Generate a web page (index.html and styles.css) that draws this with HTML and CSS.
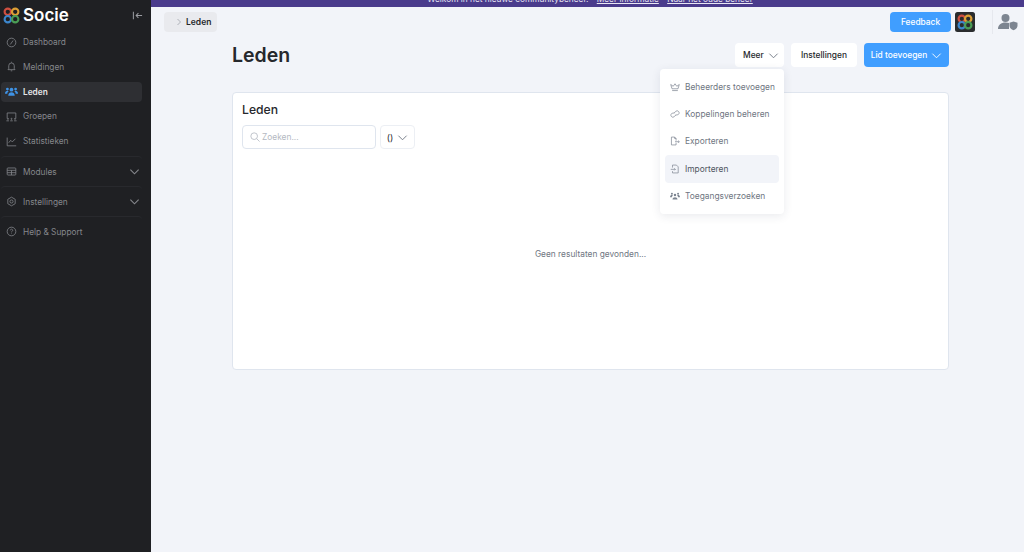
FILE: index.html
```html
<!DOCTYPE html>
<html lang="nl">
<head>
  <meta charset="UTF-8">
  <title>Leden - Socie</title>
  <link rel="stylesheet" href="styles.css">
</head>
<body>
  <aside class="sidebar">
    <div class="brand">
      <svg class="logo" viewBox="0 0 17 17" width="17" height="17" fill="none" stroke-width="2.1">
        <circle cx="4.800" cy="4.800" r="3.200" stroke="#cf4f40"/>
        <circle cx="12.200" cy="4.800" r="3.200" stroke="#dd9f35"/>
        <circle cx="4.800" cy="12.200" r="3.200" stroke="#3c86cc"/>
        <circle cx="12.200" cy="12.200" r="3.200" stroke="#4a9d55"/>
      </svg>
      <span class="brand-name">Socie</span>
      <svg class="collapse" viewBox="0 0 12 12" width="11" height="11" fill="none" stroke="#9a9ca1" stroke-width="1.100">
        <path d="M1.500 2v8M11 6H4.500M7 3.500 4.500 6 7 8.500"/>
      </svg>
    </div>
    <nav class="nav">
      <a class="nav-item">
        <svg class="nav-icon" viewBox="0 0 14 14"><circle cx="7" cy="7" r="5.500"/><path d="M5.500 9.500 9 4.500"/></svg>
        Dashboard
      </a>
      <a class="nav-item">
        <svg class="nav-icon" viewBox="0 0 14 14"><path d="M3.500 10V6a3.500 3.500 0 0 1 7 0v4l1 1h-9zM6 12.500h2M7 1v1"/></svg>
        Meldingen
      </a>
      <a class="nav-item active">
        <svg class="nav-icon filled" viewBox="0 0 14 14"><circle cx="7" cy="5" r="2"/><circle cx="2.600" cy="4.400" r="1.500"/><circle cx="11.400" cy="4.400" r="1.500"/><path d="M3.500 11.500c0-5 7-5 7 0zM0 9.300c0-3.300 3.200-3.600 4-2.500-1 .7-1.400 1.400-1.500 2.500zM14 9.300c0-3.300-3.200-3.600-4-2.500 1 .7 1.400 1.400 1.500 2.500z"/></svg>
        Leden
      </a>
      <a class="nav-item">
        <svg class="nav-icon" viewBox="0 0 14 14"><path d="M1.500 9.500V2.500h11v7M.5 12.500h3.200M5.400 12.500h3.200M10.300 12.500h3.200"/><circle cx="2.500" cy="10" r=".7"/><circle cx="7" cy="10" r=".7"/><circle cx="11.500" cy="10" r=".7"/></svg>
        Groepen
      </a>
      <a class="nav-item">
        <svg class="nav-icon" viewBox="0 0 14 14"><path d="M1.500 2v10.500H13M3.500 8.500 6 5.500 8 7.500 12 3.500"/></svg>
        Statistieken
      </a>
      <a class="nav-item ruled">
        <svg class="nav-icon" viewBox="0 0 14 14"><rect x="1.500" y="2.500" width="11" height="9" rx="1"/><path d="M1.500 5.500h11M1.500 8.500h11M7 5.500v6"/></svg>
        Modules
        <svg class="nav-chevron" viewBox="0 0 12 12"><path d="M1.500 4 6 8.500 10.500 4"/></svg>
      </a>
      <a class="nav-item ruled">
        <svg class="nav-icon" viewBox="0 0 14 14"><path d="m7 1.500 4.700 2.700v5.600L7 12.500 2.300 9.800V4.200z"/><circle cx="7" cy="7" r="2"/></svg>
        Instellingen
        <svg class="nav-chevron" viewBox="0 0 12 12"><path d="M1.500 4 6 8.500 10.500 4"/></svg>
      </a>
      <a class="nav-item ruled">
        <svg class="nav-icon" viewBox="0 0 14 14"><circle cx="7" cy="7" r="5.500"/><path d="M5.500 5.500a1.500 1.500 0 1 1 2.300 1.300c-.5.3-.8.6-.8 1.200M7 9.500v.6"/></svg>
        Help &amp; Support
      </a>
    </nav>
  </aside>

  <div class="main">
    <div class="banner">
      <p class="banner-text">Welkom in het nieuwe communitybeheer. <a>Meer informatie</a> <a>Naar het oude beheer</a></p>
    </div>

    <header class="topbar">
      <div class="crumb">
        <svg class="crumb-icon" viewBox="0 0 8 10" width="6" height="8"><path d="M2 1l4 4-4 4"/></svg>
        Leden
      </div>
      <div class="top-actions">
        <button class="btn primary feedback">Feedback</button>
        <svg class="app-logo" viewBox="0 0 20 20" width="20" height="20" fill="none" stroke-width="2.200">
          <rect width="20" height="20" rx="2.500" fill="#2a2c2e" stroke="none"/>
          <circle cx="6.800" cy="6.800" r="3.200" stroke="#cf4f40"/>
          <circle cx="13.200" cy="6.800" r="3.200" stroke="#dd9f35"/>
          <circle cx="6.800" cy="13.200" r="3.200" stroke="#3c86cc"/>
          <circle cx="13.200" cy="13.200" r="3.200" stroke="#4a9d55"/>
        </svg>
        <div class="account">
          <svg viewBox="0 0 20 18" width="20" height="18" fill="#7d8591">
            <circle cx="7.500" cy="5" r="4"/>
            <path d="M0 16c0-4 3-6.500 7.500-6.500 1.300 0 2.500.2 3.500.6V16z"/>
            <path d="M15.500 8.500l4 1.300v2.700c0 2.400-1.800 4-4 4.800-2.200-.8-4-2.400-4-4.800V9.800z"/>
          </svg>
        </div>
      </div>
    </header>

    <section class="content">
      <div class="page-head">
        <h1>Leden</h1>
        <div class="page-actions">
          <div class="more">
            <button class="btn">Meer
              <svg class="btn-chevron" viewBox="0 0 12 12"><path d="M1.500 4 6 8.500 10.500 4"/></svg>
            </button>
            <ul class="menu">
              <li class="menu-item">
                <svg class="menu-icon" viewBox="0 0 14 14"><path d="M2.800 9.500 1 3.500l3.500 2.500L7 2.500 9.500 6 13 3.500l-1.800 6zM3 12h8"/></svg>
                Beheerders toevoegen
              </li>
              <li class="menu-item">
                <svg class="menu-icon" viewBox="0 0 14 14"><path d="M6.500 5.500 3.800 5.800A2.800 2.800 0 0 0 2 10.500a2.800 2.800 0 0 0 4 .2L8 8.500"/><path d="M7.500 8.500l2.700-.3a2.800 2.800 0 0 0 1.800-4.700 2.800 2.800 0 0 0-4-.2L6 5.500"/></svg>
                Koppelingen beheren
              </li>
              <li class="menu-item">
                <svg class="menu-icon" viewBox="0 0 14 14"><path d="M8.500 9.500v3H2v-11h4.500l2 2v3M6.500 1.500v2h2M7 8h6M11.500 6.500 13 8l-1.500 1.500"/></svg>
                Exporteren
              </li>
              <li class="menu-item current">
                <svg class="menu-icon" viewBox="0 0 14 14"><path d="M3.500 5V1.500H9l2.500 2.500v8.500h-8V10M1 7.500h6.500M6 6l1.500 1.500L6 9"/></svg>
                Importeren
              </li>
              <li class="menu-item">
                <svg class="menu-icon solid" viewBox="0 0 14 14"><circle cx="7" cy="5.500" r="1.700"/><circle cx="2.700" cy="3.800" r="1.400"/><circle cx="11.300" cy="3.800" r="1.400"/><path d="M3.500 12c0-4.500 7-4.500 7 0zM0 8.800c0-3.300 3-3.500 4-2.500-.8.600-1.200 1.500-1.300 2.500zM14 8.800c0-3.300-3-3.500-4-2.500.8.600 1.200 1.500 1.300 2.500z"/></svg>
                Toegangsverzoeken
              </li>
            </ul>
          </div>
          <button class="btn">Instellingen</button>
          <button class="btn primary">Lid toevoegen
            <svg class="btn-chevron" viewBox="0 0 12 12"><path d="M1.500 4 6 8.500 10.500 4"/></svg>
          </button>
        </div>
      </div>

      <div class="card">
        <h2>Leden</h2>
        <div class="filters">
          <div class="search">
            <svg class="search-icon" viewBox="0 0 12 12" width="10" height="10"><circle cx="5" cy="5" r="4"/><path d="m8 8 3.500 3.500"/></svg>
            Zoeken...
          </div>
          <button class="count">()
            <svg class="btn-chevron" viewBox="0 0 12 12"><path d="M1.500 4 6 8.500 10.500 4"/></svg>
          </button>
        </div>
        <p class="empty">Geen resultaten gevonden...</p>
      </div>
    </section>
  </div>
</body>
</html>
```

FILE: styles.css
```css
:root {
  --font-body: 'Inter', 'Liberation Sans', sans-serif;
  --color-bg: #f2f4f9;
  --color-sidebar: #1f2023;
  --color-text: #26282c;
  --color-muted: #6f7682;
  --color-nav: #85878c;
  --color-border: #dfe5ee;
  --color-primary: #409eff;
}

* {
  box-sizing: border-box;
}

html, body {
  height: 100%;
}

body {
  margin: 0;
  display: flex;
  overflow: hidden;
  background: var(--color-bg);
  color: var(--color-text);
  font-family: var(--font-body);
}

button {
  font-family: inherit;
}

/* sidebar */
.sidebar {
  width: 151px;
  flex-shrink: 0;
  background: var(--color-sidebar);
  padding: 0 9px 0 1px;
}

.brand {
  height: 30px;
  display: flex;
  align-items: center;
  padding-left: 2px;
}

.logo {
  flex-shrink: 0;
}

.brand-name {
  margin-left: 3px;
  color: #fff;
  font-size: 17px;
  font-weight: 600;
}

.collapse {
  margin-left: auto;
  margin-right: -1px;
}

.nav-item {
  height: 20px;
  margin-top: 4.800px;
  display: flex;
  align-items: center;
  gap: 6px;
  padding-left: 5px;
  border-radius: 4px;
  color: var(--color-nav);
  font-size: 8.300px;
}

.nav-item:first-child {
  margin-top: 2px;
}

.nav-item.active {
  color: #e4e5e7;
  font-weight: 600;
  background: #2e2f33;
}

.nav-item.ruled {
  height: 30px;
  margin-top: 0;
  border-top: 1px solid #28292d;
}

.nav-item.ruled:nth-child(6) {
  margin-top: 5px;
}

.nav-icon {
  width: 11px;
  height: 11px;
  flex-shrink: 0;
  fill: none;
  stroke: #85878c;
  stroke-width: 1;
}

.nav-icon.filled {
  width: 13px;
  height: 13px;
  margin: 0 -1px;
  fill: #3f93e6;
  stroke: none;
}

.nav-chevron {
  width: 11px;
  height: 11px;
  margin-left: auto;
  margin-right: 2px;
  fill: none;
  stroke: #85878c;
  stroke-width: 1.200;
}

/* main column */
.main {
  flex: 1;
  min-width: 0;
}

.banner {
  height: 7px;
  padding-left: 5px;
  overflow: hidden;
  background: #4a3b8c;
  text-align: center;
  color: #e8e6f3;
  font-size: 8.300px;
  line-height: 11px;
}

.banner-text {
  margin: -6px 0 0;
}

.banner-text a {
  margin-left: 6px;
  text-decoration: underline;
}

.topbar {
  height: 29px;
  display: flex;
  align-items: center;
  justify-content: space-between;
  padding-left: 13px;
}

.crumb {
  height: 20px;
  display: flex;
  align-items: center;
  gap: 4px;
  padding: 0 6px 0 12px;
  border-radius: 4px;
  background: #e9eaee;
  font-size: 8.500px;
  font-weight: 600;
}

.crumb-icon {
  fill: none;
  stroke: #9a9ea6;
  stroke-width: 1;
}

.top-actions {
  display: flex;
  align-items: center;
}

.btn {
  height: 24px;
  display: flex;
  align-items: center;
  gap: 4px;
  padding: 0 8px;
  border: none;
  border-radius: 4px;
  background: #fff;
  color: var(--color-text);
  font-size: 8.400px;
  font-weight: 500;
}

.btn.primary {
  background: var(--color-primary);
  color: #fff;
}

.btn.feedback {
  width: 61px;
  height: 20px;
  justify-content: center;
  padding: 0;
  margin-right: 4px;
}

.app-logo {
  margin-right: 17px;
}

.account {
  width: 32px;
  height: 24px;
  display: flex;
  align-items: center;
  padding-left: 5px;
  border-left: 1px solid #e6e8ee;
}

.content {
  width: 717px;
  margin-left: 81px;
}

.page-head {
  height: 32px;
  display: flex;
  align-items: center;
  justify-content: space-between;
  margin-top: 3px;
}

h1 {
  margin: 0;
  font-size: 19.500px;
  font-weight: 600;
}

.page-actions {
  display: flex;
  gap: 7px;
}

.btn-chevron {
  width: 11px;
  height: 11px;
  flex-shrink: 0;
  fill: none;
  stroke: currentColor;
  stroke-width: 1;
}

.more {
  position: relative;
}

.more .btn {
  width: 49px;
}

.more .btn-chevron {
  stroke: #6f7682;
}

.page-actions > .btn {
  width: 66px;
  justify-content: center;
  padding: 0;
}

.page-actions > .btn.primary {
  width: 85px;
}

.menu {
  position: absolute;
  top: 26px;
  right: 0;
  z-index: 5;
  width: 124px;
  margin: 0;
  padding: 4px 5px;
  list-style: none;
  background: #fff;
  border-radius: 4px;
  box-shadow: 0 2px 10px rgba(40, 50, 80, 0.1);
}

.menu-item {
  height: 27.400px;
  display: flex;
  align-items: center;
  gap: 5px;
  padding-left: 5px;
  border-radius: 4px;
  color: var(--color-muted);
  font-size: 8.400px;
  white-space: nowrap;
}

.menu-item.current {
  background: var(--color-bg);
  color: #4f555f;
}

.menu-icon {
  width: 10px;
  height: 10px;
  flex-shrink: 0;
  fill: none;
  stroke: #7d8591;
  stroke-width: 1;
}

.menu-icon.solid {
  fill: #7d8591;
  stroke: none;
}

.card {
  height: 278px;
  margin-top: 21px;
  padding: 9px 9px 10px;
  background: #fff;
  border: 1px solid var(--color-border);
  border-radius: 4px;
}

h2 {
  margin: 0;
  font-size: 12.200px;
  font-weight: 500;
  line-height: 15px;
}

.filters {
  display: flex;
  gap: 4px;
  margin-top: 8px;
}

.search {
  width: 134px;
  height: 24px;
  display: flex;
  align-items: center;
  gap: 2px;
  padding-left: 7px;
  border: 1px solid var(--color-border);
  border-radius: 4px;
  color: #b4b9c2;
  font-size: 8.400px;
}

.search-icon {
  fill: none;
  stroke: #b4b9c2;
  stroke-width: 1;
}

.count {
  width: 35px;
  height: 24px;
  display: flex;
  align-items: center;
  justify-content: center;
  gap: 4px;
  padding: 0;
  background: #fff;
  border: 1px solid #eceff4;
  border-radius: 4px;
  color: var(--color-text);
  font-size: 9px;
}

.count .btn-chevron {
  stroke: #6f7682;
}

.empty {
  margin: 100px 0 0;
  text-align: center;
  color: var(--color-muted);
  font-size: 8.350px;
}
```
